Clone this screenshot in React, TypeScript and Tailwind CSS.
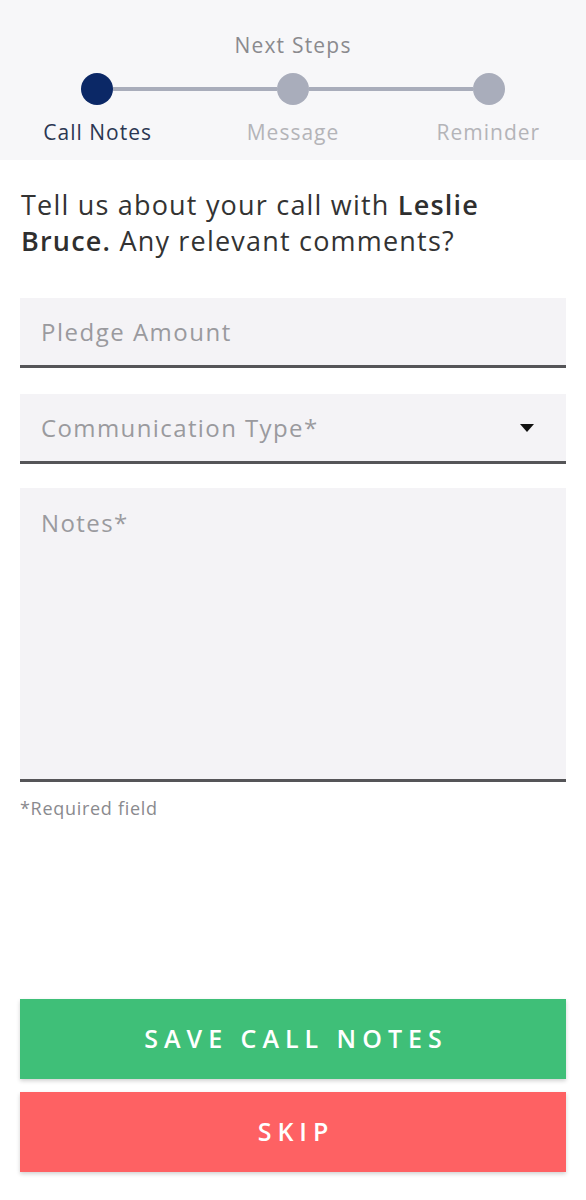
export default function App() {
  const steps = [
    { label: 'Call Notes', active: true },
    { label: 'Message', active: false },
    { label: 'Reminder', active: false },
  ]

  return (
    <div className="min-h-[1200px] bg-white font-['Open_Sans','Liberation_Sans',sans-serif]">
      <div className="bg-[#f7f7f9] pt-[32px] pb-[14px]">
        <p className="text-center text-[21px] leading-[26px] tracking-[1.2px] text-[#8a8a8e]">Next Steps</p>

        <div className="mt-[15px] flex items-center px-[81px]">
          <div className="h-[32px] w-[32px] shrink-0 rounded-full bg-[#0b2866]" />
          <div className="h-[4px] flex-1 bg-[#a9adbb]" />
          <div className="h-[32px] w-[32px] shrink-0 rounded-full bg-[#a9adbb]" />
          <div className="h-[4px] flex-1 bg-[#a9adbb]" />
          <div className="h-[32px] w-[32px] shrink-0 rounded-full bg-[#a9adbb]" />
        </div>

        <div className="mt-[13px] grid grid-cols-3">
          {steps.map((s) => (
            <p
              key={s.label}
              className={
                s.active
                  ? 'text-center text-[21px] leading-[28px] tracking-[1px] text-[#2b3652]'
                  : 'text-center text-[21px] leading-[28px] tracking-[1px] text-[#b4b4b8]'
              }
            >
              {s.label}
            </p>
          ))}
        </div>
      </div>

      <div className="px-[20px]">
        <p className="mt-[27px] pl-[1px] text-[27px] leading-[36px] tracking-[1.2px] text-[#333333]">
          Tell us about your call with <span className="font-semibold text-[#2f2f2f]">Leslie</span>
          <br />
          <span className="font-semibold text-[#2f2f2f]">Bruce.</span> Any relevant comments?
        </p>

        <div className="mt-[39px] flex h-[70px] items-center border-b-[3px] border-[#555558] bg-[#f4f3f6] px-[21px]">
          <span className="text-[24px] tracking-[1.5px] text-[#9a9a9e]">Pledge Amount</span>
        </div>

        <div className="mt-[26px] flex h-[70px] items-center justify-between border-b-[3px] border-[#555558] bg-[#f4f3f6] pl-[21px] pr-[32px]">
          <span className="text-[24px] tracking-[1.4px] text-[#9a9a9e]">Communication Type*</span>
          <svg width="14" height="8" viewBox="0 0 14 8">
            <path d="M0 0 L14 0 L7 8 Z" fill="#111" />
          </svg>
        </div>

        <div className="mt-[24px] h-[294px] border-b-[3px] border-[#555558] bg-[#f4f3f6] px-[21px] pt-[19px]">
          <span className="text-[24px] leading-[32px] tracking-[1.4px] text-[#9a9a9e]">Notes*</span>
        </div>

        <p className="mt-[15px] text-[18px] leading-[22px] tracking-[0.7px] text-[#8a8a8e]">*Required field</p>

        <div className="mt-[180px] flex flex-col gap-[13px]">
          <button className="flex h-[80px] w-full items-center justify-center bg-[#3fbf78] pl-[6px] text-[25px] font-semibold tracking-[6px] text-white shadow-[0_2px_4px_rgba(0,0,0,0.18)]">
            SAVE CALL NOTES
          </button>
          <button className="flex h-[80px] w-full items-center justify-center bg-[#fe6163] pl-[6px] text-[25px] font-semibold tracking-[6px] text-white shadow-[0_2px_4px_rgba(0,0,0,0.18)]">
            SKIP
          </button>
        </div>
      </div>
    </div>
  )
}
